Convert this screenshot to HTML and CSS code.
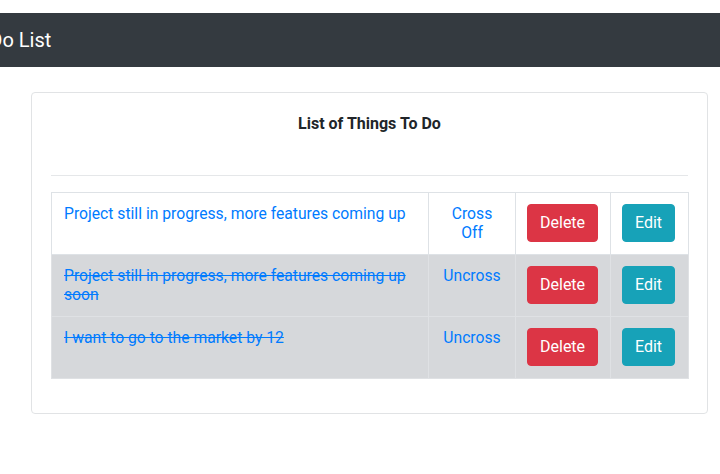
FILE: index.html
```html
<!DOCTYPE html>
<html>
<head>
<meta charset="utf-8">
<link rel="stylesheet" href="styles.css">
</head>
<body>
<nav class="navbar"><span class="brand">To Do List</span></nav>
<main class="page">
  <section class="card">
    <h6 class="title">List of Things To Do</h6>
    <hr class="rule">
    <table class="todos">
      <colgroup>
        <col class="c-text"><col class="c-toggle"><col class="c-del"><col class="c-edit">
      </colgroup>
      <tbody>
        <tr>
          <td><a class="item">Project still in progress, more features coming up</a></td>
          <td class="center"><a class="item">Cross Off</a></td>
          <td class="action"><button class="btn btn-danger">Delete</button></td>
          <td class="action"><button class="btn btn-info">Edit</button></td>
        </tr>
        <tr class="done">
          <td><a class="item struck">Project still in progress, more features coming up soon</a></td>
          <td class="center"><a class="item">Uncross</a></td>
          <td class="action"><button class="btn btn-danger">Delete</button></td>
          <td class="action"><button class="btn btn-info">Edit</button></td>
        </tr>
        <tr class="done">
          <td><a class="item struck">I want to go to the market by 12</a></td>
          <td class="center"><a class="item">Uncross</a></td>
          <td class="action"><button class="btn btn-danger">Delete</button></td>
          <td class="action"><button class="btn btn-info">Edit</button></td>
        </tr>
      </tbody>
    </table>
  </section>
</main>
</body>
</html>
```

FILE: styles.css
```css
html, body {
  margin: 0;
  padding: 0;
  background: #fff;
  font-family: Roboto, "Liberation Sans", sans-serif;
  font-size: 16px;
  color: #212529;
  overflow: hidden;
}

.navbar {
  margin-top: 13px;
  height: 54px;
  background: #343a40;
  display: flex;
  align-items: center;
  overflow: hidden;
}

.brand {
  margin-left: -38px;
  color: #fff;
  font-size: 20px;
  line-height: 30px;
  white-space: nowrap;
}

.page {
  padding: 25px 12px 0 31px;
}

.card {
  width: 637px;
  padding: 19px;
  border: 1px solid #e1e3e5;
  border-radius: 4px;
  background: #fff;
}

.title {
  margin: 0;
  font-size: 16px;
  font-weight: 700;
  line-height: 24px;
  text-align: center;
  color: #212529;
}

.rule {
  margin: 39px 0 16px 0;
  border: 0;
  border-top: 1px solid #e5e7e9;
  height: 0;
}

.todos {
  width: 637px;
  table-layout: fixed;
  border-collapse: collapse;
  margin-bottom: 15px;
}

.c-text { width: 377px; }
.c-toggle { width: 87px; }
.c-del { width: 95px; }
.c-edit { width: 78px; }

.todos td {
  border: 1px solid #dee2e6;
  padding: 11px 12px 12px 12px;
  vertical-align: top;
}

.todos td.action {
  padding-left: 11px;
  padding-right: 0;
  text-align: left;
}

.todos tr.done td {
  background: #d6d8db;
  border-color: #dfe1e4;
}

.center { text-align: center; }

.item {
  color: #007bff;
  font-size: 15.7px;
  line-height: 19px;
  cursor: pointer;
}

.struck { text-decoration: line-through; }

.btn {
  display: inline-block;
  vertical-align: top;
  font-family: Roboto, "Liberation Sans", sans-serif;
  font-size: 16px;
  line-height: 24px;
  padding: 6px 12px;
  border: 1px solid transparent;
  border-radius: 4px;
  color: #fff;
  margin: 0;
}

.btn-danger { background: #dc3545; border-color: #dc3545; }
.btn-info { background: #17a2b8; border-color: #17a2b8; }
```
